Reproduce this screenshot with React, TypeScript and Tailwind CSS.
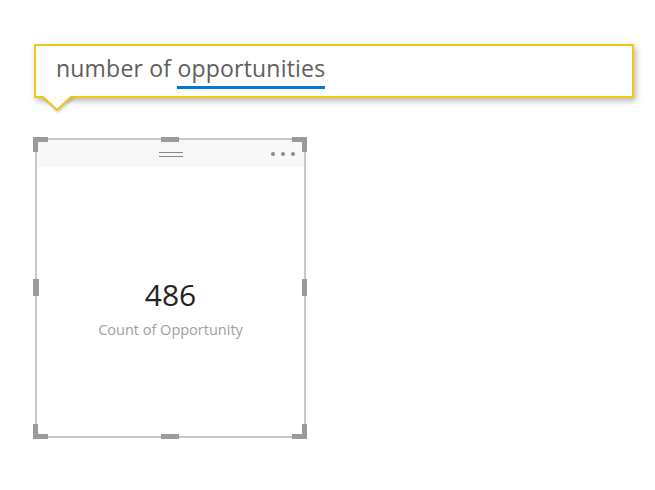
export default function App() {
  const handle = 'absolute bg-[#9b9b9b]';

  return (
    <div className="min-h-screen w-full bg-white pt-[44px] pl-[34px] font-['Open_Sans',sans-serif]">
      {/* Q&A search box */}
      <div className="relative w-[600px] h-[54px] border-2 border-[#f2c811] bg-white shadow-[2px_3px_6px_rgba(0,0,0,0.28)]">
        <div className="flex h-full items-center pl-[20px] pb-[6px] text-[23px] text-[#605e5c] tracking-[0.2px]">
          <span>number of&nbsp;</span>
          <span className="relative">
            opportunities
            <span className="absolute left-0 right-0 bottom-[-4px] h-[3px] bg-[#0078d4]" />
          </span>
        </div>
        <svg
          className="absolute left-[5px] top-[50px] drop-shadow-[1px_2px_1px_rgba(0,0,0,0.18)]"
          width="32"
          height="16"
          viewBox="0 0 32 16"
        >
          <polygon points="1,0 16,14 31,0" fill="#ffffff" />
          <polyline points="1,0 16,14 31,0" fill="none" stroke="#f2c811" strokeWidth="2" />
        </svg>
      </div>

      {/* Card visual */}
      <div className="relative mt-[40px] ml-[1px] w-[271px] h-[300px] border-2 border-[#c8c8c8] bg-white">
        <div className="relative flex h-[27px] items-center justify-center bg-[#f8f8f8]">
          <div className="flex flex-col gap-[3px] mt-[2px]">
            <div className="w-[24px] h-[1px] bg-[#8a8a8a]" />
            <div className="w-[24px] h-[1px] bg-[#8a8a8a]" />
          </div>
          <div className="absolute right-[9px] top-[12px] flex gap-[6px]">
            <div className="w-[4px] h-[4px] rounded-full bg-[#8a8a8a]" />
            <div className="w-[4px] h-[4px] rounded-full bg-[#8a8a8a]" />
            <div className="w-[4px] h-[4px] rounded-full bg-[#8a8a8a]" />
          </div>
        </div>
        <div className="flex flex-col items-center pt-[108px]">
          <div className="text-[30px] leading-[40px] text-[#252423]">486</div>
          <div className="mt-[5px] text-[14.5px] leading-[20px] text-[#a19f9d]">Count of Opportunity</div>
        </div>

        {/* selection handles */}
        <div className={`${handle} left-[-4px] top-[-3px] w-[15px] h-[5px]`} />
        <div className={`${handle} left-[-4px] top-[-3px] w-[5px] h-[15px]`} />
        <div className={`${handle} right-[-3px] top-[-3px] w-[15px] h-[5px]`} />
        <div className={`${handle} right-[-3px] top-[-3px] w-[5px] h-[15px]`} />
        <div className={`${handle} left-[-4px] bottom-[-3px] w-[15px] h-[5px]`} />
        <div className={`${handle} left-[-4px] bottom-[-3px] w-[5px] h-[15px]`} />
        <div className={`${handle} right-[-3px] bottom-[-3px] w-[15px] h-[5px]`} />
        <div className={`${handle} right-[-3px] bottom-[-3px] w-[5px] h-[15px]`} />
        <div className={`${handle} left-[124px] top-[-3px] w-[18px] h-[5px]`} />
        <div className={`${handle} left-[124px] bottom-[-3px] w-[18px] h-[5px]`} />
        <div className={`${handle} left-[-4px] top-[139px] w-[6px] h-[17px]`} />
        <div className={`${handle} right-[-3px] top-[139px] w-[5px] h-[17px]`} />
      </div>
    </div>
  );
}
